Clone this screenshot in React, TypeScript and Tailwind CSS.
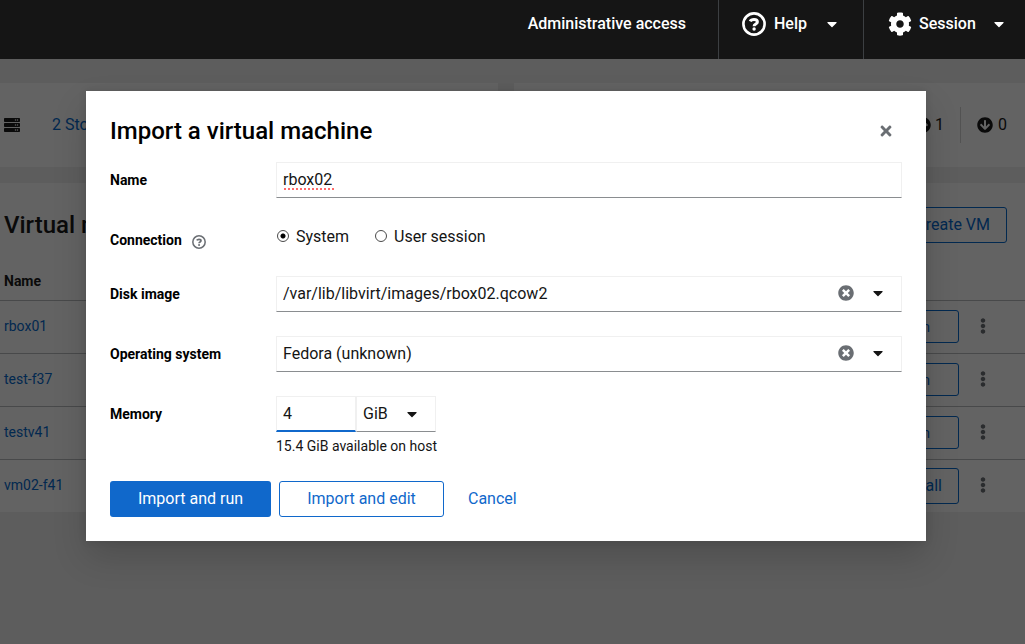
import React, { useState } from 'react';
import {
  FaArrowCircleDown,
  FaArrowCircleUp,
  FaCaretDown,
  FaCog,
  FaEllipsisV,
  FaServer,
  FaTimes,
  FaTimesCircle,
} from 'react-icons/fa';

interface Machine {
  name: string;
  action: 'Run' | 'Install';
}

const machines: Machine[] = [
  { name: 'rbox01', action: 'Run' },
  { name: 'test-f37', action: 'Run' },
  { name: 'testv41', action: 'Run' },
  { name: 'vm02-f41', action: 'Install' },
];

const HelpIcon: React.FC<{ className?: string }> = ({ className }) => (
  <svg viewBox="0 0 24 24" fill="none" stroke="currentColor" className={className} aria-hidden="true">
    <circle cx="12" cy="12" r="10.6" strokeWidth="2.6" />
    <path d="M8.2 9.3C8.9 7.8 10.3 7.4 12 7.4c2 0 3.4.8 3.4 2.5 0 2.2-3.3 1.9-3.3 4.3" strokeWidth="3" />
    <circle cx="12.1" cy="17" r="1.7" fill="currentColor" stroke="none" />
  </svg>
);

interface ComboBoxProps {
  id: string;
  value: string;
  onChange: (value: string) => void;
}

const ComboBox: React.FC<ComboBoxProps> = ({ id, value, onChange }) => (
  <div className="flex h-9 items-center border border-[#f0f0f0] border-b-[#8a8d90] pr-[15px] pb-0.5">
    <input
      id={id}
      type="text"
      value={value}
      onChange={e => onChange(e.target.value)}
      spellCheck={false}
      className="h-full min-w-0 flex-1 px-1.5 text-base focus:outline-none"
    />
    <button type="button" aria-label="Clear" onClick={() => onChange('')} className="text-[#6a6e73]">
      <FaTimesCircle size={16} />
    </button>
    <button type="button" aria-label="Options" className="ml-4">
      <FaCaretDown size={16} />
    </button>
  </div>
);

const radioClass =
  'mb-[3px] h-3 w-3 appearance-none rounded-full border border-[#4a4a4a] bg-white checked:bg-[radial-gradient(circle,#000_2px,transparent_3px)]';

const ImportDialog: React.FC = () => {
  const [name, setName] = useState('rbox02');
  const [connection, setConnection] = useState('system');
  const [diskImage, setDiskImage] = useState('/var/lib/libvirt/images/rbox02.qcow2');
  const [os, setOs] = useState('Fedora (unknown)');
  const [memory, setMemory] = useState('4');
  const [unit, setUnit] = useState('GiB');

  return (
    <div
      role="dialog"
      aria-labelledby="dialog-title"
      className="w-full bg-white p-6 shadow-[0_16px_32px_rgba(3,3,3,0.16),0_0_8px_rgba(3,3,3,0.1)]"
    >
      <div className="mb-4 flex h-[31px] items-center justify-between">
        <h1 id="dialog-title" className="text-2xl font-medium text-black">Import a virtual machine</h1>
        <button type="button" aria-label="Close" className="p-2 text-[#6a6e73]">
          <FaTimes size={16} />
        </button>
      </div>

      <form onSubmit={e => e.preventDefault()}>
        <div className="grid grid-cols-[150px_1fr] gap-x-4 gap-y-6">
          <label htmlFor="name" className="pt-2 text-sm font-bold text-black">Name</label>
          <div className="relative h-9">
            <input
              id="name"
              type="text"
              value={name}
              onChange={e => setName(e.target.value)}
              spellCheck={false}
              className="h-full w-full border border-[#f0f0f0] border-b-[#8a8d90] px-1.5 pb-0.5 text-base focus:outline-none"
            />
            {/* Spelling mark under the default name */}
            {name === 'rbox02' && (
              <div className="pointer-events-none absolute bottom-2 left-2 w-[50px] border-b-2 border-dotted border-[#ff6b6b]" />
            )}
          </div>

          <div className="flex items-center gap-2.5 pt-1.5 text-sm font-bold text-black">
            <span id="connection-label">Connection</span>
            <button type="button" aria-label="More information" className="pt-1 text-[#6a6e73]">
              <HelpIcon className="h-3.5 w-3.5" />
            </button>
          </div>
          <div role="radiogroup" aria-labelledby="connection-label" className="flex h-[30px] items-center gap-[26px]">
            <label className="flex items-center gap-[7px] pl-px">
              <input
                type="radio"
                name="connection"
                checked={connection === 'system'}
                onChange={() => setConnection('system')}
                className={radioClass}
              />
              System
            </label>
            <label className="flex items-center gap-[7px]">
              <input
                type="radio"
                name="connection"
                checked={connection === 'session'}
                onChange={() => setConnection('session')}
                className={radioClass}
              />
              User session
            </label>
          </div>

          <label htmlFor="disk-image" className="pt-2 text-sm font-bold text-black">Disk image</label>
          <ComboBox id="disk-image" value={diskImage} onChange={setDiskImage} />

          <label htmlFor="os" className="pt-2 text-sm font-bold text-black">Operating system</label>
          <ComboBox id="os" value={os} onChange={setOs} />

          <label htmlFor="memory" className="pt-2 text-sm font-bold text-black">Memory</label>
          <div>
            <div className="flex h-9">
              <input
                id="memory"
                type="text"
                value={memory}
                onChange={e => setMemory(e.target.value)}
                className="w-20 border border-b-2 border-[#f0f0f0] border-b-[#1068cb] px-1.5 text-base focus:outline-none"
              />
              <div className="relative w-20">
                <select
                  aria-label="Memory unit"
                  value={unit}
                  onChange={e => setUnit(e.target.value)}
                  className="h-full w-full appearance-none border border-[#f0f0f0] border-b-[#8a8d90] pl-1.5 text-base focus:outline-none"
                >
                  <option>MiB</option>
                  <option>GiB</option>
                </select>
                <FaCaretDown size={16} className="pointer-events-none absolute top-2.5 right-4" />
              </div>
            </div>
            <p className="mt-1 text-sm leading-[21px]">15.4 GiB available on host</p>
          </div>
        </div>

        <div className="mt-6 flex h-9 gap-2">
          <button type="submit" className="w-[161px] rounded-[3px] bg-[#1068cb] text-white">Import and run</button>
          <button type="button" className="w-[165px] rounded-[3px] border border-[#1068cb] text-[#1068cb]">
            Import and edit
          </button>
          <button type="button" className="px-4 text-[#1068cb]">Cancel</button>
        </div>
      </form>
    </div>
  );
};

const App: React.FC = () => (
  <div className="flex min-h-screen flex-col bg-[#f0f0f0] font-['Roboto',sans-serif] text-base text-[#151515]">
    <header className="flex h-[59px] justify-end bg-[#151515] font-medium text-white">
      <button type="button" className="px-8 pb-3">Administrative access</button>
      <button type="button" className="flex w-[145px] items-center border-l border-[#3c3f42] pb-3 pl-[23px]">
        <HelpIcon className="h-6 w-6" />
        <span className="ml-2 flex-1 text-left">Help</span>
        <FaCaretDown size={16} className="mr-[23px]" />
      </button>
      <button type="button" className="flex w-[162px] items-center border-l border-[#3c3f42] pb-3 pl-6">
        <FaCog size={24} />
        <span className="ml-[7px] flex-1 text-left">Session</span>
        <FaCaretDown size={16} className="mr-[18px]" />
      </button>
    </header>

    <div className="relative flex-1">
      <main className="pt-6">
        <div className="flex gap-4">
          <section className="flex h-21 w-[498px] items-center bg-white pl-1">
            <FaServer size={16} />
            <a href="#storage" className="ml-8 text-[#0066cc]">2 Storage pools</a>
          </section>
          <section className="flex h-21 flex-1 items-center justify-end bg-white pr-[18px]">
            <FaArrowCircleUp size={16} />
            <span className="ml-1">1</span>
            <div className="mx-4 h-9 border-l border-[#d2d2d2]" />
            <FaArrowCircleDown size={16} />
            <span className="ml-[5px]">0</span>
          </section>
        </div>

        <section className="mt-4 bg-white">
          <div className="flex h-21 items-center justify-between pr-[18px] pl-1">
            <h2 className="text-2xl font-medium">Virtual machines</h2>
            <button type="button" className="h-9 rounded-[3px] border border-[#0066cc] px-4 text-[#0066cc]">
              Create VM
            </button>
          </div>
          <table className="w-full border-collapse text-sm">
            <thead>
              <tr className="h-[33px]">
                <th className="pb-1 pl-1 text-left font-bold">Name</th>
                <th aria-label="Actions" />
                <th aria-label="Menu" />
              </tr>
            </thead>
            <tbody>
              {machines.map(machine => (
                <tr key={machine.name} className="h-[53px] border-t border-[#b8bbbe]">
                  <td className="pb-0.5 pl-1">
                    <a href={`#${machine.name}`} className="text-[#0066cc]">{machine.name}</a>
                  </td>
                  <td className="text-right">
                    <button
                      type="button"
                      className={
                        machine.action === 'Run'
                          ? 'h-[33px] rounded-[3px] border border-[#0066cc] px-7 text-[#0066cc]'
                          : 'h-9 rounded-[3px] border border-[#0066cc] px-4 text-base text-[#0066cc]'
                      }
                    >
                      {machine.action}
                    </button>
                  </td>
                  <td className="w-[66px] pb-0.5 pl-4">
                    <button type="button" aria-label="Menu" className="block text-[#6a6e73]">
                      <FaEllipsisV size={16} />
                    </button>
                  </td>
                </tr>
              ))}
            </tbody>
          </table>
        </section>
      </main>

      <div className="absolute inset-0 flex items-start bg-[#030303]/62 pt-8 pr-[99px] pl-[86px]">
        <ImportDialog />
      </div>
    </div>
  </div>
);

export default App;
